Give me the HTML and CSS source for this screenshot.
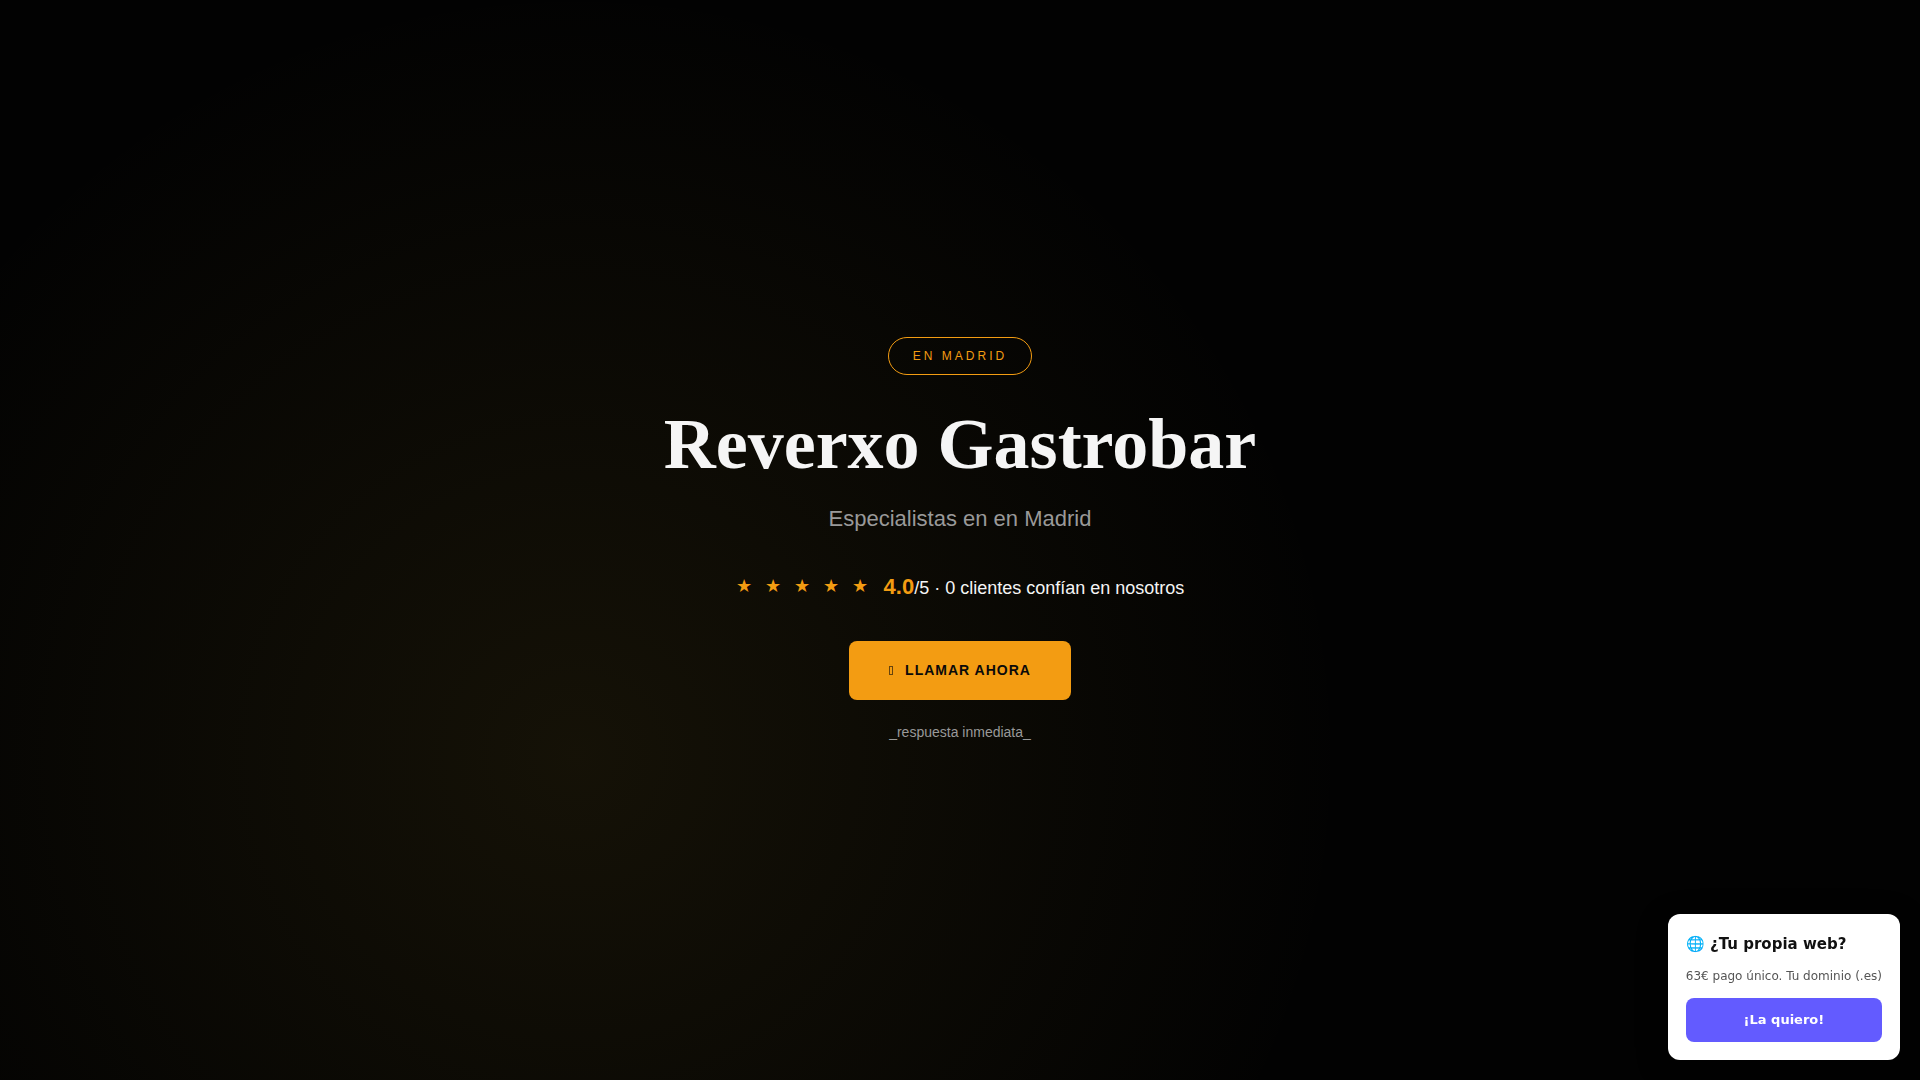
FILE: index.html
```html
<!doctype html>
<html lang="es">
<head>
<title>Reverxo Gastrobar</title>
<meta charset="utf-8">
<meta name="viewport" content="width=device-width, initial-scale=1.0">
<link rel="stylesheet" href="styles.css">
</head>
<body>

<!-- Hero -->
<section class="hero">
    <span class="badge">En Madrid</span>
    <h1>Reverxo Gastrobar</h1>
    <p class="subtitle">Especialistas en en Madrid</p>
    <div class="rating">
        <div class="stars"><span>★</span><span>★</span><span>★</span><span>★</span><span>★</span></div>
        <p class="score"><strong>4.0</strong>/5 · 0 clientes confían en nosotros</p>
    </div>
    <a class="cta" href="#llamar"><i class="icon"></i>Llamar ahora</a>
    <p class="note">_respuesta inmediata_</p>
</section>

<!-- Floating promo -->
<aside class="promo">
    <h2>🌐 ¿Tu propia web?</h2>
    <p>63€ pago único. Tu dominio (.es)</p>
    <a class="promo-button" href="#web">¡La quiero!</a>
</aside>

</body>
</html>
```
FILE: styles.css
```css
* {
    margin: 0;
    padding: 0;
    box-sizing: border-box;
}

body {
    background: #020202;
    color: #f5f5f5;
    font-family: "Liberation Sans", Arial, sans-serif;
    line-height: 1.6;
}
a {
    text-decoration: none;
}

/* hero */
.hero {
    min-height: 100vh;
    padding: 32px;
    display: flex;
    flex-direction: column;
    align-items: center;
    justify-content: center;
    text-align: center;
    background: radial-gradient(circle at 30% 70%, rgba(212, 175, 55, 0.09) 0%, transparent 50%);
}
.badge {
    border: 1px solid #f39c12;
    border-radius: 50px;
    padding: 8px 24px;
    margin-bottom: 32px;
    color: #f39c12;
    font-size: 12px;
    line-height: 20px;
    letter-spacing: 3px;
    text-transform: uppercase;
}
h1 {
    font-family: "Liberation Serif", "Times New Roman", serif;
    font-size: 72px;
    font-weight: 700;
    line-height: 74px;
    margin-bottom: 20px;
}
.subtitle {
    color: #999;
    font-size: 22px;
    line-height: 36px;
    margin-bottom: 32px;
}
.rating {
    display: flex;
    align-items: center;
    gap: 16px;
    margin-bottom: 35px;
}
.stars {
    display: flex;
    gap: 13px;
    padding-bottom: 2px;
    color: #f39c12;
    font-size: 18px;
    line-height: 28px;
}
.score {
    font-size: 18px;
    line-height: 36px;
}
.score strong {
    color: #f39c12;
    font-size: 22px;
}
.cta {
    display: inline-flex;
    align-items: center;
    gap: 12px;
    padding: 19px 40px;
    border-radius: 8px;
    background: #f39c12;
    color: #0a0a0a;
    font-size: 14px;
    font-weight: 700;
    line-height: 21px;
    letter-spacing: 1px;
    text-transform: uppercase;
}
.icon {
    width: 4px;
    height: 9px;
    border: 1px solid rgba(10, 10, 10, 0.6);
}
.note {
    margin-top: 20px;
    color: #999;
    font-size: 14px;
    line-height: 24px;
}

/* promo */
.promo {
    position: fixed;
    right: 20px;
    bottom: 20px;
    padding: 18px;
    border-radius: 12px;
    background: #fff;
    box-shadow: 0 8px 32px rgba(0, 0, 0, 0.3);
    color: #111;
    font-family: "DejaVu Sans", sans-serif;
}
.promo h2 {
    font-size: 15px;
    line-height: 24px;
    margin-bottom: 10px;
}
.promo p {
    color: #555;
    font-size: 12px;
    line-height: 20px;
    margin-bottom: 12px;
}
.promo-button {
    display: block;
    padding: 11px 18px;
    border-radius: 8px;
    background: #635bff;
    color: #fff;
    font-size: 13px;
    font-weight: 700;
    line-height: 22px;
    text-align: center;
}
```
